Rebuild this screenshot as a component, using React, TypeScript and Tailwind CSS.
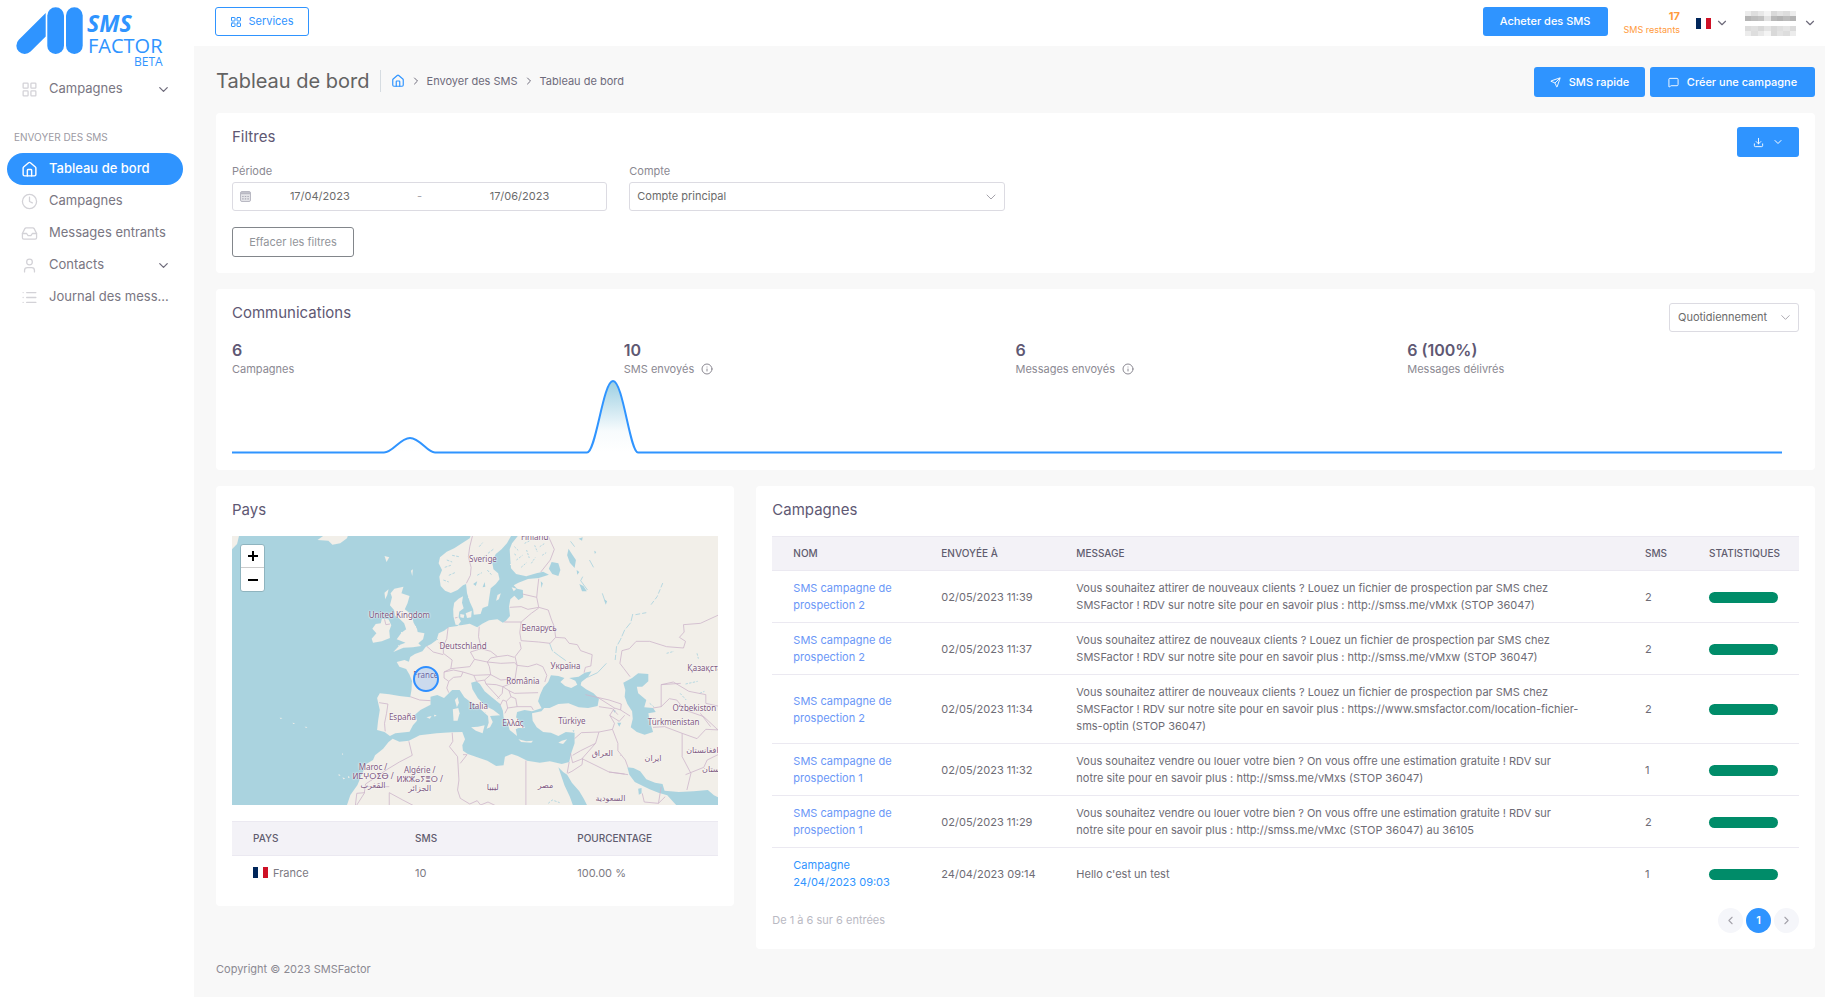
import React from "react";
import {
  ChevronDown,
  ChevronLeft,
  ChevronRight,
  Clock,
  Download,
  House,
  Inbox,
  Info,
  LayoutGrid,
  List,
  MessageSquare,
  Send,
  User,
} from "lucide-react";

const card = "rounded bg-white px-4 pt-[14px] pb-4";
const primaryButton =
  "flex items-center justify-center gap-2 rounded-[3px] bg-[#2f94ff] text-[11px] font-medium text-white";
const heading = "text-[15px] leading-5 text-[#5e5873]";
const headCell = "px-[21px] text-left text-[10px] font-medium uppercase text-[#5f5c6e]";

function Logo() {
  return (
    <svg viewBox="0 0 150 72" className="ml-[14px] block h-[72px] w-[150px] overflow-visible" role="img" aria-label="SMS Factor Beta">
      <g fill="#2f94ff">
        <path d="M31.7 12.9V36.5L16.6 51.6A8.3 8.3 0 1 1 4.8 39.8Z" />
        <rect x="33.3" y="7.3" width="16.7" height="46.7" rx="8.3" />
        <rect x="52" y="7.3" width="16.7" height="46.7" rx="8.3" />
        <g fontFamily="'Open Sans', sans-serif">
          <text x="73" y="32" fontSize="23" fontWeight="700" fontStyle="italic">SMS</text>
          <text x="74" y="53" fontSize="20">FACTOR</text>
          <text x="120" y="66" fontSize="12">BETA</text>
        </g>
      </g>
    </svg>
  );
}

function Flag() {
  return (
    <svg viewBox="0 0 15 11" className="h-[11px] w-[15px] shrink-0" role="img" aria-label="France">
      <rect width="15" height="11" fill="#fff" />
      <rect width="5" height="11" fill="#00265a" />
      <rect x="10" width="5" height="11" fill="#ce1126" />
    </svg>
  );
}

type NavProps = { icon: React.ElementType; label: string; active?: boolean; more?: boolean };

function NavItem({ icon: Icon, label, active, more }: NavProps) {
  return (
    <a
      href="#"
      className={
        active
          ? "flex h-8 items-center rounded-full bg-[#2f94ff] pr-3 pl-[14px] text-[13px] font-medium text-white"
          : "flex h-8 items-center pr-3 pl-[14px] text-[13px] text-[#797682]"
      }
    >
      <Icon size={17} strokeWidth={active ? 2 : 1.8} className={active ? "shrink-0" : "shrink-0 text-[#d3d2d7]"} />
      <span className="ml-[11px] flex-1 truncate">{label}</span>
      {more && <ChevronDown size={15} className="text-[#6e6b7b]" />}
    </a>
  );
}

function Sidebar() {
  return (
    <aside className="w-[194px] shrink-0 bg-white">
      <Logo />
      <nav className="pt-px pr-[11px] pl-[7px]">
        <NavItem icon={LayoutGrid} label="Campagnes" more />
        <h2 className="mt-6 mb-2 pl-[7px] text-[10px] leading-4 text-[#9c9aa3]">ENVOYER DES SMS</h2>
        <NavItem icon={House} label="Tableau de bord" active />
        <NavItem icon={Clock} label="Campagnes" />
        <NavItem icon={Inbox} label="Messages entrants" />
        <NavItem icon={User} label="Contacts" more />
        <NavItem icon={List} label="Journal des mess..." />
      </nav>
    </aside>
  );
}

const maskTop = ["bg-[#ececec]", "bg-[#dedede]", "bg-[#e8e8e8]", "bg-[#f4f4f4]", "bg-[#d9d9d9]", "bg-[#e3e3e3]", "bg-[#dddddd]", "bg-[#ececec]"];
const maskMid = ["bg-[#b5b5b5]", "bg-[#bdbdbd]", "bg-[#c2c2c2]", "bg-[#e2e2e2]", "bg-[#b9b9b9]", "bg-[#b3b3b3]", "bg-[#bcbcbc]", "bg-[#b4b4b4]"];
const maskLow = ["bg-[#dcdcdc]", "bg-[#e0e0e0]", "bg-[#d8d8d8]", "bg-[#e4e4e4]", "bg-[#d9d9d9]", "bg-[#dfdfdf]", "bg-[#e5e5e5]", "bg-[#dbdbdb]"];

function MaskedName() {
  return (
    <span className="flex w-[51px] flex-col" aria-hidden="true">
      {[maskTop, maskMid].map((row, i) => (
        <span key={i} className="flex h-[5px]">
          {row.map((c, j) => (
            <span key={j} className={"flex-1 " + c} />
          ))}
        </span>
      ))}
      <span className="h-[5px]" />
      {[maskLow, maskTop].map((row, i) => (
        <span key={i} className="flex h-[5px]">
          {row.map((c, j) => (
            <span key={j} className={"flex-1 " + c} />
          ))}
        </span>
      ))}
    </span>
  );
}

function Header() {
  return (
    <header className="flex h-[46px] items-center bg-white pr-2 pl-[21px]">
      <button className="mb-[3px] flex h-[29px] w-[94px] items-center justify-center gap-[6px] rounded-[3px] border border-[#2f94ff] text-[11px] text-[#2f94ff]">
        <LayoutGrid size={12} />
        Services
      </button>
      <button className={primaryButton + " mb-[3px] ml-auto h-[29px] w-[125px]"}>Acheter des SMS</button>
      <div className="ml-4 flex flex-col items-end text-[#ff9a3c]">
        <span className="text-[11px] leading-[14px] font-bold">17</span>
        <span className="text-[9px] leading-[14px]">SMS restants</span>
      </div>
      <button className="ml-4 flex items-center gap-1 text-[#6e6b7b]" aria-label="Langue">
        <Flag />
        <ChevronDown size={14} />
      </button>
      <button className="ml-4 flex items-center gap-[7px] text-[#6e6b7b]" aria-label="Compte utilisateur">
        <MaskedName />
        <ChevronDown size={14} />
      </button>
    </header>
  );
}

function TitleRow() {
  return (
    <div className="flex h-[30px] items-center">
      <div className="mb-[2px] flex items-center">
        <h1 className="text-[20px] text-[#636363]">Tableau de bord</h1>
        <nav className="ml-[10px] flex h-[22px] items-center gap-[5px] border-l border-[#d6dce1] pl-[10px] text-[11px] text-[#6e6b7b]" aria-label="Fil d'Ariane">
          <a href="#" aria-label="Accueil" className="text-[#2f94ff]">
            <House size={14} />
          </a>
          <ChevronRight size={12} />
          <a href="#">Envoyer des SMS</a>
          <ChevronRight size={12} />
          <span>Tableau de bord</span>
        </nav>
      </div>
      <button className={primaryButton + " ml-auto h-[30px] w-[111px]"}>
        <Send size={11} />
        SMS rapide
      </button>
      <button className={primaryButton + " ml-[5px] h-[30px] w-[165px]"}>
        <MessageSquare size={11} />
        Créer une campagne
      </button>
    </div>
  );
}

function CalendarIcon() {
  return (
    <svg viewBox="0 0 11 11" className="h-[11px] w-[11px] shrink-0">
      <rect x="0.5" y="0.5" width="10" height="10" rx="1.5" fill="#e4e4e8" stroke="#b9b9c3" />
      <path d="M0.5 2.2h10" stroke="#b9b9c3" strokeWidth="2" />
      <path d="M2.2 5.5h1.4M4.8 5.5h1.4M7.4 5.5h1.4M2.2 7.8h1.4M4.8 7.8h1.4M7.4 7.8h1.4" stroke="#a9a9b4" strokeWidth="1.2" />
    </svg>
  );
}

function Filters() {
  const label = "mt-[6px] block text-[11px] leading-4 text-[#8b8992]";
  return (
    <section className={card}>
      <div className="flex h-[30px] items-start justify-between">
        <h2 className={heading}>Filtres</h2>
        <button className={primaryButton + " h-[30px] w-[62px]"} aria-label="Exporter">
          <Download size={11} />
          <ChevronDown size={12} />
        </button>
      </div>
      <div className="grid grid-cols-4 gap-[22px]">
        <div>
          <label htmlFor="start" className={label}>Période</label>
          <div className="mt-[3px] flex h-[29px] items-center rounded-[3px] border border-[#dcdbe2] pr-[18px] pl-[7px] text-[11px] text-[#6b6b6b]">
            <CalendarIcon />
            <input id="start" className="w-0 flex-1 text-center" defaultValue="17/04/2023" />
            <span className="w-[62px] text-center text-[#a5a3ab]">-</span>
            <input aria-label="Fin de période" className="w-0 flex-1 text-center" defaultValue="17/06/2023" />
          </div>
        </div>
        <div>
          <label htmlFor="account" className={label}>Compte</label>
          <div className="relative mt-[3px]">
            <select id="account" className="h-[29px] w-full appearance-none rounded-[3px] border border-[#dcdbe2] px-[7px] text-[11px] text-[#6b6b6b]">
              <option>Compte principal</option>
            </select>
            <ChevronDown size={16} strokeWidth={1.5} className="pointer-events-none absolute top-[7px] right-[6px] text-[#a5a3ab]" />
          </div>
        </div>
      </div>
      <button className="mt-4 h-[30px] w-[122px] rounded-[3px] border border-[#82868b] text-[11px] text-[#92959a]">
        Effacer les filtres
      </button>
    </section>
  );
}

const stats = [
  { value: "6", label: "Campagnes" },
  { value: "10", label: "SMS envoyés", info: true },
  { value: "6", label: "Messages envoyés", info: true },
  { value: "6 (100%)", label: "Messages délivrés" },
];

const curve =
  "M0 74.5H152C161 74.5 168 60 178 60C188 60 195 74.5 203 74.5H355C364 74.5 371 3 381 3C391 3 398 74.5 406 74.5H1550";

function Communications() {
  return (
    <section className={card}>
      <div className="flex h-[29px] items-start justify-between">
        <h2 className={heading}>Communications</h2>
        <div className="relative">
          <select aria-label="Fréquence" className="h-[29px] w-[130px] appearance-none rounded-[3px] border border-[#dcdbe2] pr-6 pl-2 text-[11px] text-[#6b6b6b]">
            <option>Quotidiennement</option>
          </select>
          <ChevronDown size={15} strokeWidth={1.5} className="pointer-events-none absolute top-[7px] right-[6px] text-[#a5a3ab]" />
        </div>
      </div>
      <div className="mt-2 grid grid-cols-4">
        {stats.map((s) => (
          <div key={s.label}>
            <div className="text-base leading-5 font-semibold text-[#5e5873]">{s.value}</div>
            <div className="mt-px flex items-center gap-[7px] text-[11px] leading-4 text-[#8b8992]">
              {s.label}
              {s.info && <Info size={12} />}
            </div>
          </div>
        ))}
      </div>
      <div className="mt-px pr-[17px]">
        <svg viewBox="0 0 1550 76" preserveAspectRatio="none" className="block h-[76px] w-full">
          <defs>
            <linearGradient id="area" x1="0" y1="0" x2="0" y2="1">
              <stop offset="0" stopColor="#9ccfe2" />
              <stop offset="0.7" stopColor="#f7fbfd" />
              <stop offset="1" stopColor="#fff" />
            </linearGradient>
          </defs>
          <path d={curve} fill="url(#area)" stroke="#2f94ff" strokeWidth="2" vectorEffect="non-scaling-stroke" />
        </svg>
      </div>
    </section>
  );
}

/* Map drawing space: x 65..1503, y 168..975. */
const mapLabels: { x: number; y: number; lines: string[] }[] = [
  { x: 807, y: 233, lines: ["Sverige"] },
  { x: 960, y: 169, lines: ["Finland"] },
  { x: 560, y: 403, lines: ["United Kingdom"] },
  { x: 973, y: 441, lines: ["Беларусь"] },
  { x: 748, y: 495, lines: ["Deutschland"] },
  { x: 1051, y: 554, lines: ["Україна"] },
  { x: 638, y: 582, lines: ["France"] },
  { x: 925, y: 599, lines: ["România"] },
  { x: 1470, y: 562, lines: ["Қазақстан"] },
  { x: 794, y: 676, lines: ["Italia"] },
  { x: 569, y: 707, lines: ["España"] },
  { x: 896, y: 725, lines: ["Ελλάς"] },
  { x: 1070, y: 721, lines: ["Türkiye"] },
  { x: 1432, y: 682, lines: ["Oʻzbekiston"] },
  { x: 1371, y: 722, lines: ["Türkmenistan"] },
  { x: 1160, y: 817, lines: ["العراق"] },
  { x: 1310, y: 830, lines: ["ايران"] },
  { x: 1456, y: 806, lines: ["افغانستان"] },
  { x: 1494, y: 864, lines: ["پاکستان"] },
  { x: 482, y: 885, lines: ["Maroc /", "ⵍⵎⵖⵔⵉⴱ /", "المَغرب"] },
  { x: 620, y: 893, lines: ["Algérie /", "ⵍⵣⵣⴰⵢⴻⵔ /", "الجزائر"] },
  { x: 836, y: 918, lines: ["ليبيا"] },
  { x: 992, y: 912, lines: ["مصر"] },
  { x: 1184, y: 951, lines: ["السعودية"] },
];

function MapDrawing() {
  return (
    <svg viewBox="65 168 1438 807" preserveAspectRatio="none" className="block h-full w-full">
      <defs>
        <filter id="coast" x="-5%" y="-5%" width="110%" height="110%">
          <feTurbulence type="fractalNoise" baseFrequency="0.16" numOctaves="3" seed="4" />
          <feDisplacementMap in="SourceGraphic" scale="4" xChannelSelector="R" yChannelSelector="G" />
        </filter>
      </defs>
      <rect x="65" y="168" width="1438" height="807" fill="#aad3df" />
      <g filter="url(#coast)">
        <g fill="#f2efe9">
          <path d="M780 140L768 175 745 190 722 205 700 215 680 232 676 250 686 270 678 290 682 318 695 332 712 339 732 330 748 316 757 312 760 340 768 365 778 388 780 404 800 402 806 384 822 378 826 350 830 325 845 312 856 298 852 280 838 268 834 244 845 222 862 208 878 190 890 168 895 140Z" />
          <path d="M915 140L910 168 893 190 886 208 888 240 890 265 905 282 935 289 965 280 985 275 1002 284 972 294 940 297 912 308 898 316 908 326 925 330 926 352 912 360 900 347 888 358 884 380 887 408 875 422 866 428 850 418 825 421 805 431 790 442 768 431 742 436 726 434 720 410 719 388 722 368 735 356 748 349 745 368 750 385 737 395 735 412 742 424 732 438 706 442 692 452 676 460 670 480 654 492 638 500 628 514 606 522 592 531 588 545 575 540 552 546 560 560 580 567 590 584 597 602 596 628 592 652 560 648 530 643 502 640 494 654 502 690 497 722 494 750 516 756 532 768 548 760 590 755 600 736 612 722 606 704 622 690 652 674 652 650 672 645 692 654 716 630 738 630 752 652 775 670 800 688 822 708 824 728 818 746 828 742 836 726 828 708 858 706 838 690 815 678 792 655 776 628 772 608 788 604 798 612 812 634 836 654 858 672 866 692 868 712 880 730 886 750 908 768 904 748 912 744 932 744 918 726 905 712 908 696 930 690 952 694 975 686 990 682 980 694 952 700 954 722 966 742 985 756 1008 758 1030 768 1052 756 1078 758 1078 790 1068 820 1062 846 1040 852 1005 844 975 848 938 842 910 828 892 822 872 830 868 856 846 858 820 842 790 832 762 822 748 812 746 796 754 778 746 756 715 757 670 760 620 766 588 782 560 785 540 776 528 786 512 806 488 826 482 840 462 852 446 890 436 915 415 945 400 990 1540 990 1540 140Z" />
          <path d="M545 326L572 320 566 340 590 348 584 370 576 388 596 404 602 428 612 446 614 456 634 460 630 478 616 490 624 498 600 502 572 503 542 516 562 494 578 488 552 478 566 458 580 448 574 430 558 414 548 408 544 390 532 376 538 352 534 340Z" />
          <path d="M508 416L528 418 536 436 530 452 532 474 508 484 482 488 478 476 492 460 480 446 490 432 505 430Z" />
          <path d="M318 180L345 160 410 160 405 175 385 190 362 194 350 182Z" />
          <path d="M50 150H90L80 192 65 208 50 220Z" />
          <path d="M772 742L792 740 812 736 806 760 786 752Z" />
          <path d="M718 688L734 684 738 700 732 722 720 722Z" />
          <path d="M724 660L732 652 736 668 730 682Z" />
          <path d="M912 778L935 784 955 782 950 788 920 786Z" />
          <path d="M1030 788L1040 782 1056 778 1044 792Z" />
          <path d="M756 400L774 392 772 412 760 414Z" />
          <path d="M740 402L752 404 750 414 740 412Z" />
          <path d="M846 362L850 345 860 340 854 358Z" />
          <path d="M892 322L906 326 898 334Z" />
          <path d="M516 338L528 328 524 345 518 358Z" />
          <path d="M516 228L530 232 522 246Z" />
          <path d="M594 272L600 268 598 288Z" />
          <path d="M640 712L655 708 650 716ZM662 704L670 706 664 710Z" />
          <path d="M206 713L214 714 209 717ZM244 728L252 730 246 732ZM280 740L288 741 284 744ZM390 820L394 822 391 825ZM380 882L386 886 381 888ZM392 892L400 896 394 898ZM408 888L414 892 408 894Z" />
        </g>
        <g fill="#aad3df">
          <path d="M1008 586L1030 588 1048 594 1036 606 1050 618 1068 624 1086 614 1080 602 1062 594 1090 590 1108 578 1128 574 1118 590 1098 606 1096 616 1112 628 1134 640 1150 656 1146 678 1118 684 1090 682 1060 670 1030 672 1004 684 980 684 970 664 976 644 986 622 1000 606Z" />
          <path d="M1222 608L1248 594 1266 580 1296 582 1296 604 1278 620 1262 620 1266 640 1290 660 1284 682 1310 684 1318 696 1296 700 1300 722 1310 756 1285 764 1262 756 1244 742 1250 716 1248 694 1234 672 1226 650 1228 630Z" />
          <path d="M1030 862L1044 876 1056 884 1070 908 1092 934 1106 958 1122 990 1078 990 1064 950 1048 916Z" />
          <path d="M1234 862L1252 864 1272 874 1290 898 1316 908 1338 912 1344 932 1386 936 1430 934 1472 930 1490 946 1520 960 1520 990 1392 990 1372 968 1352 946 1326 938 1300 928 1280 918 1256 906 1240 884Z" />
          <path d="M1266 926L1276 924 1276 940 1268 944Z" />
          <path d="M1010 246L1030 250 1036 270 1030 288 1012 282 1002 266Z" />
          <path d="M1060 206L1070 222 1082 240 1078 264 1064 248 1056 226Z" />
          <path d="M1092 312L1104 318 1114 334 1100 334ZM1166 358L1174 364 1170 374ZM1084 270L1092 276 1086 284ZM1090 176L1102 172 1100 182ZM778 312L790 304 786 318ZM806 322L812 306 814 320ZM1072 750L1078 752 1074 756ZM1204 728L1216 728 1210 740ZM1192 690L1200 692 1196 698ZM978 304L984 310 980 324ZM1136 212L1142 216 1138 222Z" />
        </g>
        <g fill="none" stroke="#aad3df" strokeWidth="2.5">
          <path d="M1250 402L1244 428 1226 450 1214 478 1202 500 1198 540" strokeDasharray="22 5" />
          <path d="M1258 404L1290 398M1304 374L1322 350 1340 306" strokeDasharray="14 6" />
          <path d="M1004 490L1012 512 1030 526 1052 542M1116 592L1146 578 1172 550" />
          <path d="M1066 184L1078 200M1102 290L1096 302 1116 330M1122 240L1134 262M1160 340L1170 370" />
          <path d="M900 200L914 214M906 240L924 226M936 210L944 234M920 262L936 248M950 250L962 232M960 196L968 216M930 190L946 182M900 222L908 228M975 200L990 190M982 226L994 218" strokeDasharray="6 4" />
          <path d="M700 240L716 246M694 262L712 256M706 286L724 278M690 300L706 306M790 286L804 278M820 270L832 284M800 240L812 228M822 220L840 206M796 200L806 188M716 226L736 230" strokeDasharray="8 4" />
          <path d="M1350 520L1372 514M1406 612L1442 604M1440 520L1444 536M1390 640L1408 660M1448 640L1462 634M1300 670L1312 680M1000 970L1012 960 1034 968" strokeDasharray="7 4" />
        </g>
        <g fill="none" stroke="#cdb5cb" strokeWidth="2.4">
          <path d="M778 160L768 200 764 230 772 262 770 286 758 310" />
          <path d="M1000 168L1018 208 1006 240 978 276" />
          <path d="M972 296L968 330 966 352 924 342M966 352L972 382 940 388 920 380 886 382" />
          <path d="M972 382L1000 390 1010 420 1018 440 1022 472 1006 490 972 486 920 482 916 458 920 426 950 400 972 384M920 426L870 426" />
          <path d="M1022 472L1050 474 1062 490 1086 494 1096 512 1130 524 1126 558 1110 562 1106 578" />
          <path d="M916 486L920 506 902 530 908 556 940 560 966 552 984 560 996 586 990 606" />
          <path d="M796 440L794 470 802 506 830 514 850 530 880 526 900 532" />
          <path d="M802 506L770 516 782 538 768 560 712 566M782 538L820 546 830 534 850 530M820 546L860 550 900 548 908 556" />
          <path d="M704 442L700 476 690 498 690 520 716 540 712 566 692 576 692 594 706 604 700 624 706 638" />
          <path d="M640 498L660 516 690 524M676 488L690 498" />
          <path d="M692 576L720 570 748 576 742 590 720 592 706 604M748 576L780 586 830 584 826 560 820 546" />
          <path d="M830 584L860 600 902 596 908 556M780 586L788 604 812 600 830 584M812 600L816 612 846 614 866 620 864 640 850 656" />
          <path d="M816 612L836 634 856 656M866 620L884 632 900 640 970 638M884 632L890 650 876 664 866 660 858 676M890 650L904 656 908 680 880 684 872 700M876 664L880 684M908 680L950 680 956 690M902 596L892 610 866 620" />
          <path d="M592 650L620 660 652 662M500 668L526 672 522 700 516 730 518 754M732 412L724 414M516 418L520 434 532 432" />
          <path d="M588 784L598 826 560 846 524 868 504 882 460 912 456 940 434 975M430 975L434 940 458 938M460 920H530M530 938V975M530 938L570 960 604 978" />
          <path d="M716 758L718 784 708 800 732 830 736 900 732 930 740 955 768 972M748 824L760 824 740 850M768 972L790 962 800 975 822 966 850 980" />
          <path d="M934 842V980M1062 846L1056 880M1066 820L1072 848 1102 836 1100 854 1070 874 1058 880" />
          <path d="M1078 776L1098 758 1150 756 1190 748 1196 730 1182 706 1196 684 1146 652M1150 756L1140 790 1096 812 1072 826M1140 790L1100 836 1180 876 1226 882M1190 748L1206 790 1206 812 1228 840 1236 862" />
          <path d="M1110 644L1180 660 1216 672 1214 690 1242 708M1196 684L1214 690M1182 706L1210 724 1226 706M1150 680L1190 686 1206 704" />
          <path d="M1242 590L1224 566 1212 550 1218 512 1240 506 1260 484 1300 484 1350 500 1400 504 1406 484 1388 472 1402 456 1400 434 1450 430 1510 402" />
          <path d="M1334 680V614L1370 606 1416 634 1466 644 1466 670 1510 680M1334 614L1392 610M1310 684L1334 680 1358 656 1380 660 1404 690 1460 710 1500 748 1510 750" />
          <path d="M1310 742L1344 740 1396 760 1440 776 1466 748 1510 750M1396 760L1396 830 1422 880 1410 930M1406 884L1460 862 1470 840 1510 820M1450 700L1480 740" />
          <path d="M1236 884L1180 876M1278 940L1284 966 1326 970 1334 920M1326 970L1346 950" />
        </g>
      </g>
    </svg>
  );
}

function EuropeMap() {
  return (
    <div className="relative mt-4 h-[269px] overflow-hidden">
      <MapDrawing />
      {mapLabels.map((l) => (
        <div
          key={l.lines[0]}
          className="absolute -translate-x-1/2 -translate-y-1/2 text-center text-[8px] leading-[9px] whitespace-nowrap text-[#7f5a82] [font-family:'Noto_Sans','DejaVu_Sans',sans-serif] [text-shadow:0_0_2px_#fff,0_0_2px_#fff]"
          style={{ left: `${((l.x - 65) / 1438) * 100}%`, top: `${((l.y - 168) / 807) * 100}%` }}
        >
          {l.lines.map((t) => (
            <div key={t}>{t}</div>
          ))}
        </div>
      ))}
      <div className="absolute top-[53%] left-[40%] -mt-[13px] -ml-[14px] size-[26px] rounded-full border-2 border-[#2f8fff] bg-[#3388ff]/20" />
      <div className="absolute top-2 left-2 flex w-[25px] flex-col rounded-[3px] border border-[#8fb4bf] bg-white text-black">
        <button aria-label="Zoom avant" className="flex h-[23px] items-center justify-center border-b border-[#ccc]">
          <svg viewBox="0 0 10 10" className="size-[10px]"><path d="M5 0V10M0 5H10" stroke="#000" strokeWidth="2" /></svg>
        </button>
        <button aria-label="Zoom arrière" className="flex h-[23px] items-center justify-center">
          <svg viewBox="0 0 10 10" className="size-[10px]"><path d="M0 5H10" stroke="#000" strokeWidth="2" /></svg>
        </button>
      </div>
    </div>
  );
}

function Countries() {
  return (
    <section className={card}>
      <h2 className={heading}>Pays</h2>
      <EuropeMap />
      <table className="mt-4 w-full table-fixed">
        <thead>
          <tr className="h-[34px] border-y border-[#ebe9f1] bg-[#f3f2f7]">
            <th className={headCell}>Pays</th>
            <th className={headCell}>SMS</th>
            <th className={headCell}>Pourcentage</th>
          </tr>
        </thead>
        <tbody>
          <tr className="h-[34px] text-[11px] text-[#7c7a83]">
            <td className="px-[21px]">
              <span className="flex items-center gap-[5px]">
                <Flag />
                France
              </span>
            </td>
            <td className="px-[21px]">10</td>
            <td className="px-[21px]">100.00 %</td>
          </tr>
        </tbody>
      </table>
    </section>
  );
}

const campaigns = [
  {
    name: "SMS campagne de prospection 2",
    sent: "02/05/2023 11:39",
    message:
      "Vous souhaitez attirer de nouveaux clients ? Louez un fichier de prospection par SMS chez SMSFactor ! RDV sur notre site pour en savoir plus : http://smss.me/vMxk (STOP 36047)",
    sms: 2,
  },
  {
    name: "SMS campagne de prospection 2",
    sent: "02/05/2023 11:37",
    message:
      "Vous souhaitez attirez de nouveaux clients ? Louez un fichier de prospection par SMS chez SMSFactor ! RDV sur notre site pour en savoir plus : http://smss.me/vMxw (STOP 36047)",
    sms: 2,
  },
  {
    name: "SMS campagne de prospection 2",
    sent: "02/05/2023 11:34",
    message:
      "Vous souhaitez attirer de nouveaux clients ? Louez un fichier de prospection par SMS chez SMSFactor ! RDV sur notre site pour en savoir plus : https://www.smsfactor.com/location-fichier-sms-optin (STOP 36047)",
    sms: 2,
  },
  {
    name: "SMS campagne de prospection 1",
    sent: "02/05/2023 11:32",
    message:
      "Vous souhaitez vendre ou louer votre bien ? On vous offre une estimation gratuite ! RDV sur\nnotre site pour en savoir plus : http://smss.me/vMxs (STOP 36047)",
    sms: 1,
  },
  {
    name: "SMS campagne de prospection 1",
    sent: "02/05/2023 11:29",
    message:
      "Vous souhaitez vendre ou louer votre bien ? On vous offre une estimation gratuite ! RDV sur\nnotre site pour en savoir plus : http://smss.me/vMxc (STOP 36047) au 36105",
    sms: 2,
  },
  { name: "Campagne 24/04/2023 09:03", sent: "24/04/2023 09:14", message: "Hello c'est un test", sms: 1, plain: true },
];

function Campaigns() {
  const cell = "px-[21px] pt-[9px] pb-2";
  return (
    <section className={card + " col-span-2"}>
      <h2 className={heading}>Campagnes</h2>
      <table className="mt-4 w-full table-fixed">
        <colgroup>
          <col className="w-[148px]" />
          <col className="w-[135px]" />
          <col />
          <col className="w-[64px]" />
          <col className="w-[111px]" />
        </colgroup>
        <thead>
          <tr className="h-[34px] border-y border-[#ebe9f1] bg-[#f3f2f7]">
            <th className={headCell}>Nom</th>
            <th className={headCell}>Envoyée à</th>
            <th className={headCell}>Message</th>
            <th className={headCell}>SMS</th>
            <th className={headCell}>Statistiques</th>
          </tr>
        </thead>
        <tbody>
          {campaigns.map((c) => (
            <tr key={c.sent} className="border-b border-[#ebe9f1] text-[11px] leading-[17px] text-[#6e6c75] last:border-b-0">
              <td className={cell}>
                <a href="#" className={c.plain ? "text-[#2f94ff]" : "text-[#6b97f7]"}>{c.name}</a>
              </td>
              <td className={cell + " whitespace-nowrap"}>{c.sent}</td>
              <td className={cell + " whitespace-pre-line"}>{c.message}</td>
              <td className={cell}>{c.sms}</td>
              <td className={cell}>
                <div className="h-[11px] rounded-full bg-[#008c69]" role="img" aria-label="100 %" />
              </td>
            </tr>
          ))}
        </tbody>
      </table>
      <div className="mt-[9px] flex h-[25px] items-center justify-between text-[11px] text-[#b9b9c3]">
        <span>De 1 à 6 sur 6 entrées</span>
        <div className="flex items-center gap-[3px]">
          <button aria-label="Page précédente" className="flex size-[25px] items-center justify-center rounded-full bg-[#f5f6fa] text-[#a5a3ab]">
            <ChevronLeft size={13} />
          </button>
          <button className="size-[25px] rounded-full bg-[#2f94ff] font-semibold text-white">1</button>
          <button aria-label="Page suivante" className="flex size-[25px] items-center justify-center rounded-full bg-[#f5f6fa] text-[#a5a3ab]">
            <ChevronRight size={13} />
          </button>
        </div>
      </div>
    </section>
  );
}

export default function App() {
  return (
    <div className="flex min-h-screen bg-[#f8f8f8] [font-family:Inter,'Open_Sans',sans-serif]">
      <Sidebar />
      <div className="min-w-0 flex-1">
        <Header />
        <main className="flex flex-col gap-4 pt-[21px] pr-[10px] pl-[22px]">
          <TitleRow />
          <Filters />
          <Communications />
          <div className="grid grid-cols-3 items-start gap-[22px]">
            <Countries />
            <Campaigns />
          </div>
        </main>
        <footer className="mt-3 pl-[22px] text-[11px] leading-4 text-[#8b8992]">Copyright © 2023 SMSFactor</footer>
      </div>
    </div>
  );
}
